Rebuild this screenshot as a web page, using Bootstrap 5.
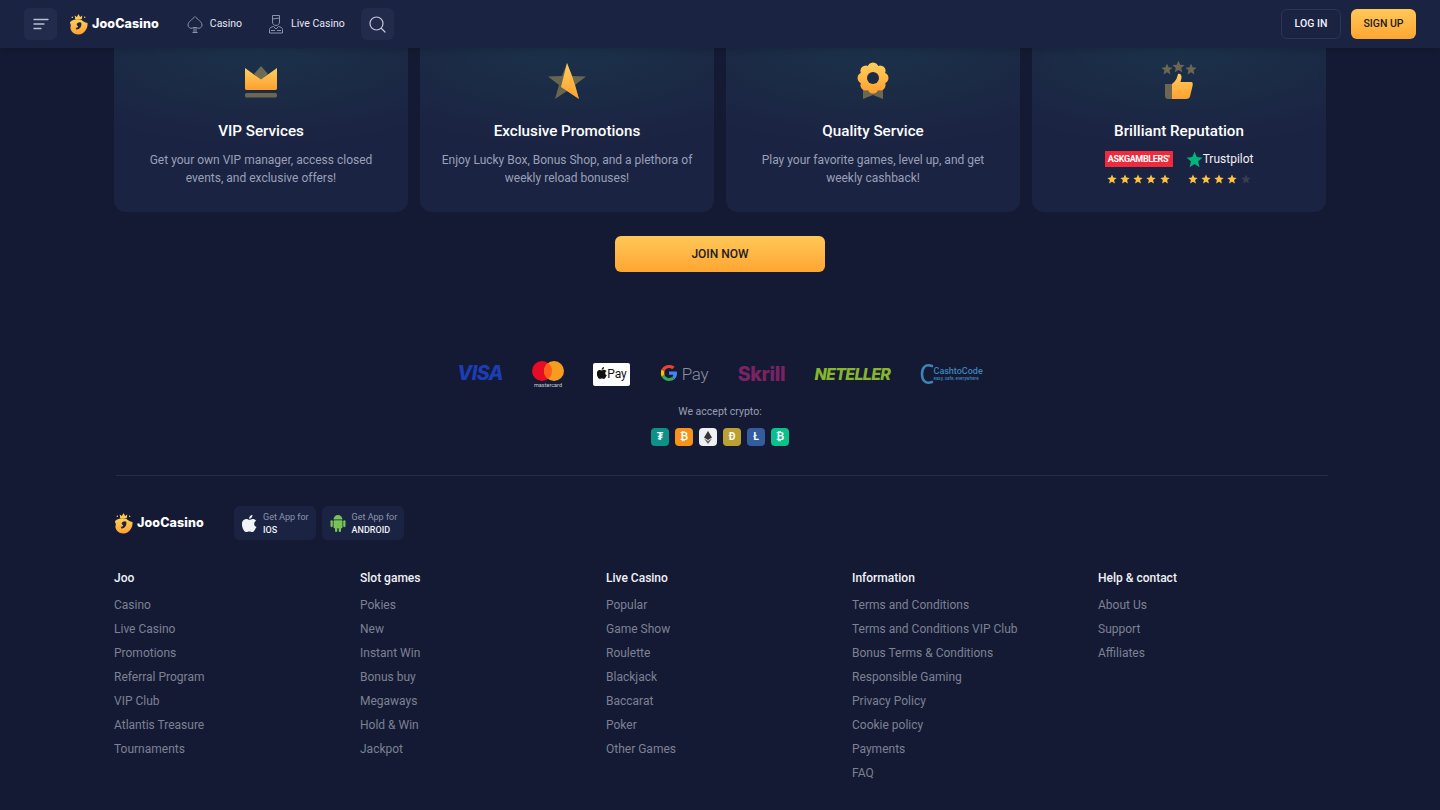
<!DOCTYPE html>
<html>
<head>
    <title>JooCasino</title>
    <meta name="viewport" content="width=device-width, initial-scale=1.0">
    <link href="https://cdn.jsdelivr.net/npm/bootstrap@5.3.2/dist/css/bootstrap.min.css" rel="stylesheet">
    <style>
        body {
            font-family: Roboto, sans-serif;
            background-color: #141a33;
            color: #fff;
            height: 810px;
            overflow: hidden;
        }

        .top-bar {
            height: 48px;
            background-color: #1b2342;
            padding: 8px 24px;
            box-shadow: 0 2px 6px rgba(0, 0, 0, 0.15);
            position: relative;
            z-index: 2;
        }

        .square-btn {
            width: 33px;
            height: 32px;
            background-color: #222b4b;
            border-radius: 6px;
            border: 0;
            padding: 0;
        }

        .brand-link {
            gap: 4px;
        }

        .brand-text {
            font-family: Inter, sans-serif;
            font-weight: 800;
            font-size: 12.5px;
            letter-spacing: 0.1px;
            color: #fff;
        }

        .top-link {
            font-size: 10.5px;
            color: #e3e6f0;
            text-decoration: none;
        }

        .top-link svg {
            margin-right: 7px;
        }

        .btn-login {
            width: 60px;
            height: 30px;
            padding: 0;
            border: 1px solid #2c3553;
            border-radius: 6px;
            background: transparent;
            color: #f0f2f8;
            font-size: 10.5px;
            font-weight: 500;
        }

        .btn-gold {
            background: linear-gradient(180deg, #ffc857 0%, #ffa632 100%);
            border: 0;
            border-radius: 6px;
            color: #1b1b26;
            font-weight: 500;
            padding: 0;
        }

        .btn-signup {
            width: 65px;
            height: 30px;
            font-size: 10.5px;
        }

        .page-wrap {
            width: 1212px;
            margin-left: 114px;
        }

        .feature-grid {
            display: grid;
            grid-template-columns: repeat(4, 294px);
            gap: 12px;
        }

        .feature-box {
            height: 164px;
            padding-top: 13px;
            text-align: center;
            background: radial-gradient(ellipse 85% 60% at 50% 0, rgba(28, 72, 84, 0.4), rgba(28, 72, 84, 0)), #1b2342;
            border-radius: 0 0 12px 12px;
        }

        .feature-box h3 {
            font-size: 15.2px;
            font-weight: 500;
            line-height: 20px;
            margin: 20px 0 10px;
        }

        .feature-box p {
            font-size: 12px;
            line-height: 18px;
            color: #99a0b8;
            margin: 0;
            padding: 0 20px;
        }

        .rating-mark {
            width: 68px;
        }

        .asg-badge {
            background-color: #ee2a3c;
            color: #fff;
            font-size: 9px;
            font-weight: 700;
            height: 16px;
            line-height: 16px;
            letter-spacing: -0.35px;
            text-align: center;
        }

        .tp-logo {
            height: 16px;
            font-size: 12px;
            line-height: 16px;
            color: #eef0f4;
            white-space: nowrap;
        }

        .rate-stars {
            font-size: 0;
            line-height: 0;
            margin-top: 7px;
            padding: 0 3px 0 2px;
        }

        .btn-join {
            display: block;
            width: 210px;
            height: 36px;
            margin: 24px auto 0;
            font-size: 12px;
        }

        .pay-row {
            margin-top: 86px;
            height: 32px;
            gap: 29.3px;
        }

        .pay-visa {
            font-family: Inter, sans-serif;
            font-weight: 800;
            font-style: italic;
            font-size: 19.5px;
            color: #1c3db4;
            letter-spacing: -0.6px;
        }

        .pay-apple {
            width: 37px;
            height: 23px;
            background-color: #fff;
            border-radius: 2px;
            color: #111;
            font-size: 12px;
            line-height: 23px;
            text-align: center;
        }

        .pay-gpay {
            font-size: 17px;
            font-weight: 300;
            color: #8b91a3;
            line-height: 22px;
            letter-spacing: -0.3px;
        }

        .pay-skrill {
            font-family: Inter, sans-serif;
            font-weight: 800;
            font-size: 19.5px;
            color: #7a2363;
            letter-spacing: -0.3px;
            position: relative;
            top: 1px;
        }

        .pay-neteller {
            font-family: Inter, sans-serif;
            font-weight: 800;
            font-style: italic;
            font-size: 16px;
            color: #86b52f;
            letter-spacing: -0.7px;
        }

        .pay-cash {
            font-size: 9px;
            font-weight: 500;
            line-height: 9px;
            color: #3f84b8;
        }

        .pay-cash small {
            display: block;
            font-size: 4.5px;
            line-height: 5px;
        }

        .crypto-label {
            font-size: 10.5px;
            color: #999fb3;
            line-height: 14px;
            margin-top: 15px;
            text-align: center;
        }

        .crypto-row {
            gap: 6px;
            margin-top: 9px;
        }

        .crypto-coin {
            width: 18px;
            height: 18px;
            border-radius: 4px;
            font-size: 10px;
            font-weight: 700;
            line-height: 18px;
            text-align: center;
            color: #fff;
        }

        .footer-line {
            border-top: 1px solid #242c47;
            margin: 29px -2px 0 2px;
        }

        .footer-brand {
            margin-top: 30px;
        }

        .app-btn {
            height: 34px;
            background-color: #1b2342;
            border-radius: 6px;
            padding: 0 7px 0 8px;
            gap: 6px;
            line-height: 12px;
            font-size: 9px;
            color: #8d94ab;
        }

        .app-btn strong {
            display: block;
            color: #eef0f6;
            font-weight: 500;
            margin-top: 1px;
        }

        .footer-cols {
            display: grid;
            grid-template-columns: repeat(5, 246px);
            margin-top: 30px;
        }

        .footer-cols h6 {
            font-size: 12px;
            font-weight: 500;
            line-height: 16px;
            margin: 0 0 7px;
            color: #f0f2f8;
        }

        .footer-cols a {
            display: block;
            font-size: 12px;
            line-height: 24px;
            color: #7c8193;
            text-decoration: none;
        }
    </style>
</head>
<body>

<svg width="0" height="0" class="position-absolute">
    <defs>
        <linearGradient id="goldFill" x1="0" y1="0" x2="0" y2="1">
            <stop offset="0" stop-color="#ffcf5c"/>
            <stop offset="1" stop-color="#ffa030"/>
        </linearGradient>
        <linearGradient id="goldBadge" gradientUnits="userSpaceOnUse" x1="0" y1="2" x2="0" y2="32">
            <stop offset="0" stop-color="#ffcf5c"/>
            <stop offset="1" stop-color="#ffa030"/>
        </linearGradient>
        <symbol id="logoMark" viewBox="0 0 20 23">
            <path d="M6.500 6.500 L6 2.500 L8.300 4 L10 1 L11.700 4 L14 2.500 L13.500 6.500 Z" fill="#ffc94f"/>
            <circle cx="3.500" cy="4.500" r=".8" fill="#ffc94f"/>
            <circle cx="16.500" cy="4.500" r=".8" fill="#ffc94f"/>
            <path d="M1 10 C2.500 7 10 5.500 13.500 7.500 C15 8.500 16 10 19.500 10.500 C20 16.500 16 22.500 10 22.500 C4 22.500 0 17 2 13 Z" fill="url(#goldFill)"/>
            <path d="M13 10.500 C13.500 14 11.500 17 8 17.500 L7 15.500 C8.500 15.800 9.500 15 9.500 13.500 C8 13.500 7.500 11.500 9 10.500 C10.500 9.500 12.500 9.500 13 10.500 Z" fill="#22243a"/>
        </symbol>
        <symbol id="starGold" viewBox="0 0 10 10">
            <path d="M5 .5 L6.300 3.600 L9.700 3.900 L7.100 6.100 L7.900 9.500 L5 7.700 L2.100 9.500 L2.900 6.100 L.3 3.900 L3.700 3.600 Z"/>
        </symbol>
    </defs>
</svg>

<header class="top-bar d-flex align-items-center">
    <button class="square-btn d-flex align-items-center justify-content-center" type="button" aria-label="Menu">
        <svg width="16" height="12" viewBox="0 0 16 12" fill="none" stroke="#b9bfd2" stroke-width="1.300" stroke-linecap="round"><path d="M1 1.500H15M1 6H11M1 10.500H8"/></svg>
    </button>
    <a class="brand-link d-flex align-items-center text-decoration-none" href="#" style="margin-left:12px;margin-right:28px">
        <svg width="19" height="22"><use href="#logoMark"/></svg>
        <span class="brand-text">JooCasino</span>
    </a>
    <a class="top-link d-flex align-items-center" href="#">
        <svg width="16" height="19" viewBox="0 0 16 19" fill="none" stroke="#8b92aa" stroke-width="1"><path d="M8 1.500 C5.500 4.500 1 6.500 1 10 C1 12.500 3.500 14 5.500 13 L7 12.500 L9 12.500 L10.500 13 C12.500 14 15 12.500 15 10 C15 6.500 10.500 4.500 8 1.500 Z"/><path d="M5.500 17.500H10.500M7 13V17.500M9 13V17.500"/></svg>
        Casino
    </a>
    <a class="top-link d-flex align-items-center" href="#" style="margin-left:26px">
        <svg width="16" height="20" viewBox="0 0 16 20" fill="none" stroke="#8b92aa" stroke-width="1"><path d="M4.500 1.500H11.500V4L4.500 5Z"/><path d="M4.500 5V8C4.500 10 6 11.500 8 11.500C10 11.500 11.500 10 11.500 8V4"/><path d="M1.500 19V15.500C1.500 13.500 3.500 13 5.500 12.500L8 15L10.500 12.500C12.500 13 14.500 13.500 14.500 15.500V19Z"/><path d="M3 16.500H7M9 16.500H13"/></svg>
        Live Casino
    </a>
    <button class="square-btn d-flex align-items-center justify-content-center" type="button" aria-label="Search" style="margin-left:16px">
        <svg width="17" height="17" viewBox="0 0 17 17" fill="none" stroke="#c3c8d8" stroke-width="1.200" stroke-linecap="round"><circle cx="7.500" cy="7.500" r="6.500"/><path d="M12.500 12.500L16 16"/></svg>
    </button>
    <div class="d-flex ms-auto" style="column-gap:10px">
        <button class="btn btn-login" type="button">LOG IN</button>
        <button class="btn btn-gold btn-signup" type="button">SIGN UP</button>
    </div>
</header>

<main class="page-wrap">
    <section class="feature-grid">
        <div class="feature-box">
            <svg width="40" height="40" viewBox="0 0 40 40">
                <path d="M20 5L27 13L20 20L13 13Z" fill="#6d6a55"/>
                <path d="M4 7L20 18.500L36 7V27.500C36 28.200 35.500 29 34.500 29H5.500C4.500 29 4 28.200 4 27.500Z" fill="url(#goldFill)"/>
                <rect x="4" y="32" width="32" height="4.500" rx="1.500" fill="#6d6650"/>
            </svg>
            <h3>VIP Services</h3>
            <p>Get your own VIP manager, access closed events, and exclusive offers!</p>
        </div>
        <div class="feature-box">
            <svg width="40" height="40" viewBox="0 0 40 40">
                <path d="M20 2L25 15L39 15.500L28 24L32 38L20 30L8 38L12 24L1 15.500L15 15Z" fill="#686650"/>
                <path d="M20 2L25 15L28 24L32 38L14 26Z" fill="url(#goldFill)"/>
            </svg>
            <h3>Exclusive Promotions</h3>
            <p>Enjoy Lucky Box, Bonus Shop, and a plethora of weekly reload bonuses!</p>
        </div>
        <div class="feature-box">
            <svg width="40" height="40" viewBox="0 0 40 40">
                <path d="M10 26V38L20 34L30 38V26Z" fill="#6d6650"/>
                <g fill="url(#goldBadge)">
                    <circle cx="20" cy="17" r="11"/>
                    <circle cx="30" cy="17" r="5.500"/>
                    <circle cx="27.100" cy="24.100" r="5.500"/>
                    <circle cx="20" cy="27" r="5.500"/>
                    <circle cx="12.900" cy="24.100" r="5.500"/>
                    <circle cx="10" cy="17" r="5.500"/>
                    <circle cx="12.900" cy="9.900" r="5.500"/>
                    <circle cx="20" cy="7" r="5.500"/>
                    <circle cx="27.100" cy="9.900" r="5.500"/>
                </g>
                <circle cx="20" cy="17" r="6" fill="#1b2a45"/>
            </svg>
            <h3>Quality Service</h3>
            <p>Play your favorite games, level up, and get weekly cashback!</p>
        </div>
        <div class="feature-box">
            <svg width="40" height="40" viewBox="0 0 40 40">
                <g fill="#6d6650">
                    <use href="#starGold" x="2" y="2" width="12" height="12"/>
                    <use href="#starGold" x="13" y="-1" width="13" height="13"/>
                    <use href="#starGold" x="26" y="2" width="12" height="12"/>
                </g>
                <path d="M6 23H13V38H9C7 38 6 37 6 35Z" fill="#6d6650"/>
                <path d="M13 23C17 20 18 17 19 13C21 12 23 14 22.500 17L21.500 21H32C34 21 34 23 33.500 25L31 35.500C30.500 37 29.500 38 27 38H13Z" fill="url(#goldFill)"/>
            </svg>
            <h3>Brilliant Reputation</h3>
            <div class="d-flex justify-content-center" style="column-gap:13px">
                <div class="rating-mark">
                    <div class="asg-badge">ASKGAMBLERS'</div>
                    <div class="rate-stars d-flex justify-content-between">
                        <svg width="10" height="10" fill="#ffc23e"><use href="#starGold"/></svg>
                        <svg width="10" height="10" fill="#ffc23e"><use href="#starGold"/></svg>
                        <svg width="10" height="10" fill="#ffc23e"><use href="#starGold"/></svg>
                        <svg width="10" height="10" fill="#ffc23e"><use href="#starGold"/></svg>
                        <svg width="10" height="10" fill="#ffc23e"><use href="#starGold"/></svg>
                    </div>
                </div>
                <div class="rating-mark">
                    <div class="tp-logo d-flex align-items-center">
                        <svg width="18" height="17" viewBox="0 0 10 10" fill="#00b67a"><use href="#starGold"/></svg>Trustpilot
                    </div>
                    <div class="rate-stars d-flex justify-content-between">
                        <svg width="10" height="10" fill="#ffc23e"><use href="#starGold"/></svg>
                        <svg width="10" height="10" fill="#ffc23e"><use href="#starGold"/></svg>
                        <svg width="10" height="10" fill="#ffc23e"><use href="#starGold"/></svg>
                        <svg width="10" height="10" fill="#ffc23e"><use href="#starGold"/></svg>
                        <svg width="10" height="10" fill="#3a3d4e"><use href="#starGold"/></svg>
                    </div>
                </div>
            </div>
        </div>
    </section>

    <button class="btn btn-gold btn-join" type="button">JOIN NOW</button>

    <section class="pay-row d-flex align-items-center justify-content-center">
        <span class="pay-visa">VISA</span>
        <svg width="32" height="27" viewBox="0 0 32 27">
            <circle cx="10" cy="10" r="10" fill="#e80b26"/>
            <circle cx="22" cy="10" r="10" fill="#f59d1f"/>
            <path d="M16 2A10 10 0 0 1 16 18A10 10 0 0 1 16 2Z" fill="#ff5f16"/>
            <text x="16" y="26" font-size="5.500" font-family="Roboto" fill="#c9ccd6" text-anchor="middle">mastercard</text>
        </svg>
        <div class="pay-apple"><svg width="10" height="12" viewBox="0 0 17 20" fill="#111" style="vertical-align:-1px"><path d="M12 0C12.200 2.300 10 4.500 8 4.300C7.700 2.200 9.900 .2 12 0ZM14 10.500C14 8.500 15.200 7.500 16.300 6.700C15 5 13.200 4.700 12.500 4.700C10.800 4.500 9.300 5.700 8.400 5.700C7.500 5.700 6.200 4.700 4.700 4.800C2.800 4.800 1 5.900 .2 7.700C-1.500 11 .4 16 2.200 18.500C3 19.800 4 20 5 20C6 20 6.500 19.300 8.300 19.300C10 19.300 10.500 20 11.700 20C12.900 20 13.700 18.900 14.500 17.800C15.400 16.500 15.800 15.300 16.800 14C15.200 13.500 14 12.300 14 10.500Z"/></svg>Pay</div>
        <span class="pay-gpay d-flex align-items-center"><svg width="18" height="18" viewBox="0 0 18 18" style="margin-right:4px;margin-top:-2px">
            <path d="M17 9.200C17 8.600 17 8 16.800 7.500H9V10.700H13.500C13.300 11.700 12.700 12.600 11.800 13.200L14.500 15.300C16 13.800 17 11.700 17 9.200Z" fill="#4285f4"/>
            <path d="M9 17C11.200 17 13 16.300 14.500 15.300L11.800 13.200C11 13.700 10.100 14 9 14C6.900 14 5.100 12.600 4.500 10.700L1.700 12.800C3 15.300 5.800 17 9 17Z" fill="#34a853"/>
            <path d="M4.500 10.700C4.200 9.700 4.200 8.400 4.500 7.300L1.700 5.200C.6 7.200 .6 10.800 1.700 12.800Z" fill="#fbbc05"/>
            <path d="M9 4C10.200 4 11.300 4.400 12.200 5.200L14.600 2.800C13.100 1.500 11.200 1 9 1C5.800 1 3 2.700 1.700 5.200L4.500 7.300C5.100 5.400 6.900 4 9 4Z" fill="#ea4335"/>
        </svg>Pay</span>
        <span class="pay-skrill">Skrill</span>
        <span class="pay-neteller">NETELLER</span>
        <div class="d-flex align-items-center">
            <svg width="14" height="24" viewBox="0 0 14 24" fill="none" stroke="#3f84b8" stroke-width="2.500" stroke-linecap="round"><path d="M12 4C5 1.500 2 6 2 12C2 18 5 22.500 12 20"/></svg>
            <div class="pay-cash">CashtoCode<small>easy, safe, everywhere</small></div>
        </div>
    </section>

    <p class="crypto-label mb-0">We accept crypto:</p>
    <div class="crypto-row d-flex justify-content-center">
        <div class="crypto-coin" style="background-color:#0e9187">₮</div>
        <div class="crypto-coin" style="background-color:#f7931a">₿</div>
        <div class="crypto-coin d-flex align-items-center justify-content-center" style="background-color:#eef0f3">
            <svg width="8" height="13" viewBox="0 0 8 13"><path d="M4 0L8 6.500L4 9L0 6.500Z" fill="#343434"/><path d="M4 10L8 7.500L4 13L0 7.500Z" fill="#666"/></svg>
        </div>
        <div class="crypto-coin" style="background-color:#bda032">Ð</div>
        <div class="crypto-coin" style="background-color:#345d9d">Ł</div>
        <div class="crypto-coin" style="background-color:#0ac18e">₿</div>
    </div>

    <div class="footer-line"></div>

    <section class="footer-brand d-flex align-items-center">
        <a class="brand-link d-flex align-items-center text-decoration-none" href="#" style="width:120px">
            <svg width="19" height="22"><use href="#logoMark"/></svg>
            <span class="brand-text">JooCasino</span>
        </a>
        <div class="app-btn d-flex align-items-center">
            <svg width="15" height="17" viewBox="0 0 17 20" fill="#f2f3f7"><path d="M12 0C12.200 2.300 10 4.500 8 4.300C7.700 2.200 9.900 .2 12 0ZM14 10.500C14 8.500 15.200 7.500 16.300 6.700C15 5 13.200 4.700 12.500 4.700C10.800 4.500 9.300 5.700 8.400 5.700C7.500 5.700 6.200 4.700 4.700 4.800C2.800 4.800 1 5.900 .2 7.700C-1.500 11 .4 16 2.200 18.500C3 19.800 4 20 5 20C6 20 6.500 19.300 8.300 19.300C10 19.300 10.500 20 11.700 20C12.900 20 13.700 18.900 14.500 17.800C15.400 16.500 15.800 15.300 16.800 14C15.200 13.500 14 12.300 14 10.500Z"/></svg>
            <div>Get App for<strong>IOS</strong></div>
        </div>
        <div class="app-btn d-flex align-items-center" style="margin-left:6px">
            <svg width="16" height="18" viewBox="0 0 16 18" fill="#79c257"><path d="M3.500 5.500C3.700 3 5.600 1 8 1C10.400 1 12.300 3 12.500 5.500Z"/><rect x="3.500" y="6.200" width="9" height="8" rx="1"/><rect x=".5" y="6.200" width="2.300" height="7" rx="1.100"/><rect x="13.200" y="6.200" width="2.300" height="7" rx="1.100"/><rect x="5" y="13" width="2.300" height="5" rx="1.100"/><rect x="8.700" y="13" width="2.300" height="5" rx="1.100"/></svg>
            <div>Get App for<strong>ANDROID</strong></div>
        </div>
    </section>

    <section class="footer-cols">
        <div>
            <h6>Joo</h6>
            <a href="#">Casino</a>
            <a href="#">Live Casino</a>
            <a href="#">Promotions</a>
            <a href="#">Referral Program</a>
            <a href="#">VIP Club</a>
            <a href="#">Atlantis Treasure</a>
            <a href="#">Tournaments</a>
        </div>
        <div>
            <h6>Slot games</h6>
            <a href="#">Pokies</a>
            <a href="#">New</a>
            <a href="#">Instant Win</a>
            <a href="#">Bonus buy</a>
            <a href="#">Megaways</a>
            <a href="#">Hold &amp; Win</a>
            <a href="#">Jackpot</a>
        </div>
        <div>
            <h6>Live Casino</h6>
            <a href="#">Popular</a>
            <a href="#">Game Show</a>
            <a href="#">Roulette</a>
            <a href="#">Blackjack</a>
            <a href="#">Baccarat</a>
            <a href="#">Poker</a>
            <a href="#">Other Games</a>
        </div>
        <div>
            <h6>Information</h6>
            <a href="#">Terms and Conditions</a>
            <a href="#">Terms and Conditions VIP Club</a>
            <a href="#">Bonus Terms &amp; Conditions</a>
            <a href="#">Responsible Gaming</a>
            <a href="#">Privacy Policy</a>
            <a href="#">Cookie policy</a>
            <a href="#">Payments</a>
            <a href="#">FAQ</a>
        </div>
        <div>
            <h6>Help &amp; contact</h6>
            <a href="#">About Us</a>
            <a href="#">Support</a>
            <a href="#">Affiliates</a>
        </div>
    </section>
</main>

<script src="https://cdn.jsdelivr.net/npm/bootstrap@5.3.2/dist/js/bootstrap.bundle.min.js"></script>
</body>
</html>
